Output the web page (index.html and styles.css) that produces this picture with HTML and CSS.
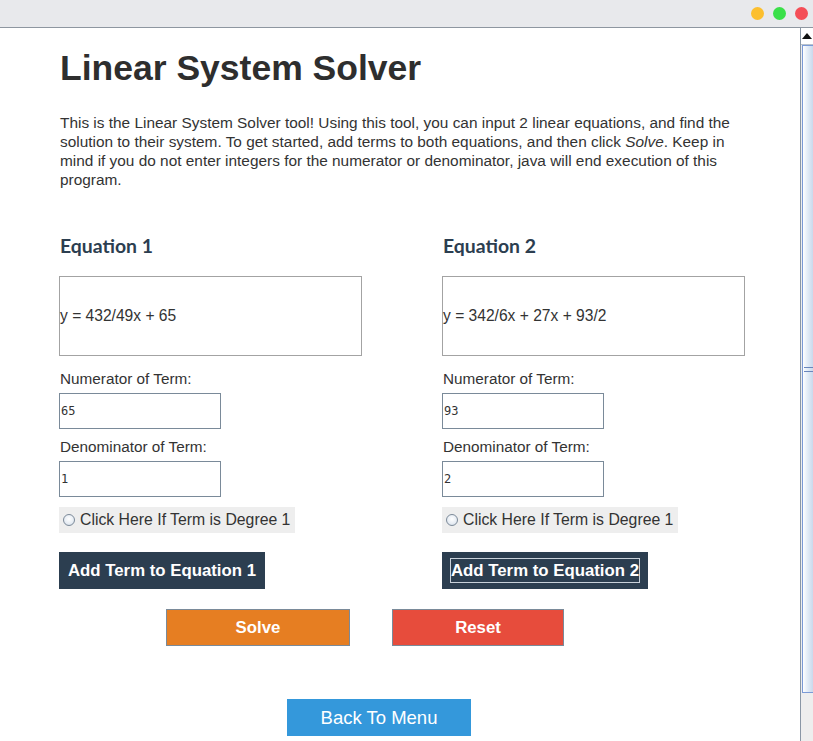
FILE: index.html
```html
<!DOCTYPE html>
<html>
<head>
<meta charset="utf-8">
<link rel="stylesheet" href="styles.css">
</head>
<body>
<div class="window">
  <div class="titlebar">
    <span class="light yellow"></span>
    <span class="light green"></span>
    <span class="light red"></span>
  </div>
  <div class="body">
    <main class="main">
      <h1 class="title">Linear System Solver</h1>
      <p class="intro">This is the Linear System Solver tool! Using this tool, you can input 2 linear equations, and find the<br>solution to their system. To get started, add terms to both equations, and then click <em>Solve</em>. Keep in<br>mind if you do not enter integers for the numerator or denominator, java will end execution of this<br>program.</p>
      <div class="columns">
        <section class="col">
          <h2 class="eq-title">Equation 1</h2>
          <div class="eq-box">y = 432/49x + 65</div>
          <div class="label">Numerator of Term:</div>
          <div class="field">65</div>
          <div class="label">Denominator of Term:</div>
          <div class="field">1</div>
          <div class="radio"><span class="dot"></span>Click Here If Term is Degree 1</div>
          <div class="add-btn">Add Term to Equation 1</div>
        </section>
        <section class="col">
          <h2 class="eq-title">Equation 2</h2>
          <div class="eq-box">y = 342/6x + 27x + 93/2</div>
          <div class="label">Numerator of Term:</div>
          <div class="field">93</div>
          <div class="label">Denominator of Term:</div>
          <div class="field">2</div>
          <div class="radio"><span class="dot"></span>Click Here If Term is Degree 1</div>
          <div class="add-btn focused"><span class="focus">Add Term to Equation 2</span></div>
        </section>
      </div>
      <div class="actions">
        <div class="btn solve">Solve</div>
        <div class="btn reset">Reset</div>
      </div>
      <div class="back-row">
        <div class="btn back">Back To Menu</div>
      </div>
    </main>
    <div class="scrollbar">
      <div class="arrow"><svg width="10" height="6" viewBox="0 0 10 6"><path d="M0 6 L5 0 L10 6 Z" fill="#111"/></svg></div>
      <div class="thumb"><span class="grip"></span></div>
      <div class="track"></div>
    </div>
  </div>
</div>
</body>
</html>
```
FILE: styles.css
```css
html, body {
  margin: 0;
  padding: 0;
  background: #fff;
}
.window {
  width: 813px;
  height: 741px;
  display: flex;
  flex-direction: column;
  overflow: hidden;
  font-family: "Liberation Sans", Arial, sans-serif;
  color: #333;
}
.titlebar {
  height: 27px;
  flex: none;
  background: #e8e9ec;
  border-bottom: 1px solid #8e96a0;
  display: flex;
  justify-content: flex-end;
  align-items: center;
  gap: 9px;
  padding-right: 5px;
  box-sizing: content-box;
}
.light {
  width: 13px;
  height: 13px;
  border-radius: 50%;
  display: block;
}
.yellow { background: #fcbf2e; }
.green { background: #3ae049; }
.red { background: #f44e57; }
.body {
  flex: 1;
  display: flex;
  min-height: 0;
}
.main {
  flex: 1;
  min-width: 0;
  overflow: hidden;
  padding-left: 59px;
}
.title {
  margin: 19px 0 0 1px;
  font-size: 35.5px;
  font-weight: bold;
  line-height: 42px;
  color: #2e2e2e;
}
.intro {
  margin: 24px 0 0 1px;
  font-size: 15.4px;
  line-height: 19px;
  color: #333;
  white-space: nowrap;
}
.intro em { font-style: italic; }
.columns {
  display: grid;
  grid-template-columns: 383px 383px;
  margin-top: 46px;
}
.col {
  display: flex;
  flex-direction: column;
  align-items: flex-start;
}
.eq-title {
  margin: 0 0 19px 1px;
  font-family: Lato, sans-serif;
  font-weight: bold;
  font-size: 19.4px;
  line-height: 22px;
  color: #2c3e50;
}
.eq-box {
  width: 301px;
  height: 77px;
  border: 1px solid #a3a3a3;
  display: flex;
  align-items: center;
  font-size: 15.6px;
  color: #333;
  padding-bottom: 1px;
  box-sizing: content-box;
}
.label {
  font-size: 15.3px;
  line-height: 18px;
  margin-top: 14px;
  margin-left: 1px;
  color: #333;
}
.field {
  margin-top: 5px;
  width: 159px;
  height: 34px;
  border: 1px solid #7a8a99;
  display: flex;
  align-items: center;
  padding-left: 1px;
  box-sizing: content-box;
  font-family: "DejaVu Sans Mono", monospace;
  font-size: 12px;
  color: #333;
}
.field + .label { margin-top: 9px; }
.radio {
  margin-top: 10px;
  height: 26px;
  background: #eeeeee;
  display: flex;
  align-items: center;
  padding: 0 5px 0 4px;
  font-size: 15.8px;
  color: #333;
}
.dot {
  width: 12px;
  height: 12px;
  border-radius: 50%;
  border: 1px solid #7c8a99;
  background: radial-gradient(circle at 50% 40%, #ffffff 0%, #e6ecf3 60%, #c9d3de 100%);
  margin-right: 5px;
  box-sizing: border-box;
}
.add-btn {
  margin-top: 19px;
  height: 37px;
  padding: 0 9px;
  background: #2c3e50;
  color: #fff;
  font-weight: bold;
  font-size: 16.8px;
  display: flex;
  align-items: center;
}
.add-btn.focused { padding: 0 8px; }
.focus {
  border: 1px solid #c9d1da;
  padding: 1px 0px;
  line-height: 21px;
}
.actions {
  display: flex;
  margin-top: 20px;
  margin-left: 107px;
  gap: 42px;
}
.btn {
  height: 37px;
  display: flex;
  align-items: center;
  justify-content: center;
  color: #fff;
  font-size: 16.8px;
  font-weight: bold;
  box-sizing: border-box;
}
.solve {
  width: 184px;
  background: #e67e22;
  border: 1px solid #7a8a99;
}
.reset {
  width: 172px;
  background: #e74c3c;
  border: 1px solid #7a8a99;
}
.back-row {
  margin-top: 53px;
  padding-left: 228px;
}
.back {
  width: 184px;
  background: #3498db;
  font-weight: normal;
  font-size: 18.5px;
}
.scrollbar {
  width: 12px;
  flex: none;
  border-left: 1px solid #8a97a6;
  display: flex;
  flex-direction: column;
  background: #eeeeee;
}
.arrow {
  height: 16px;
  flex: none;
  background: #fff;
  border-bottom: 1px solid #b8c2cc;
  display: flex;
  align-items: center;
  justify-content: center;
}
.thumb {
  height: 648px;
  flex: none;
  margin-left: 1px;
  border: 1px solid #7b9ad6;
  border-right: none;
  background: linear-gradient(to right, #ffffff 0%, #e6eef8 40%, #c9d9ec 100%);
  display: flex;
  align-items: center;
  justify-content: center;
  box-sizing: border-box;
}
.grip {
  width: 9px;
  height: 5px;
  border-top: 1px solid #6a86bc;
  border-bottom: 1px solid #6a86bc;
  box-sizing: border-box;
  position: relative;
}
.track {
  flex: 1;
  background: #eeeeee;
}
```
